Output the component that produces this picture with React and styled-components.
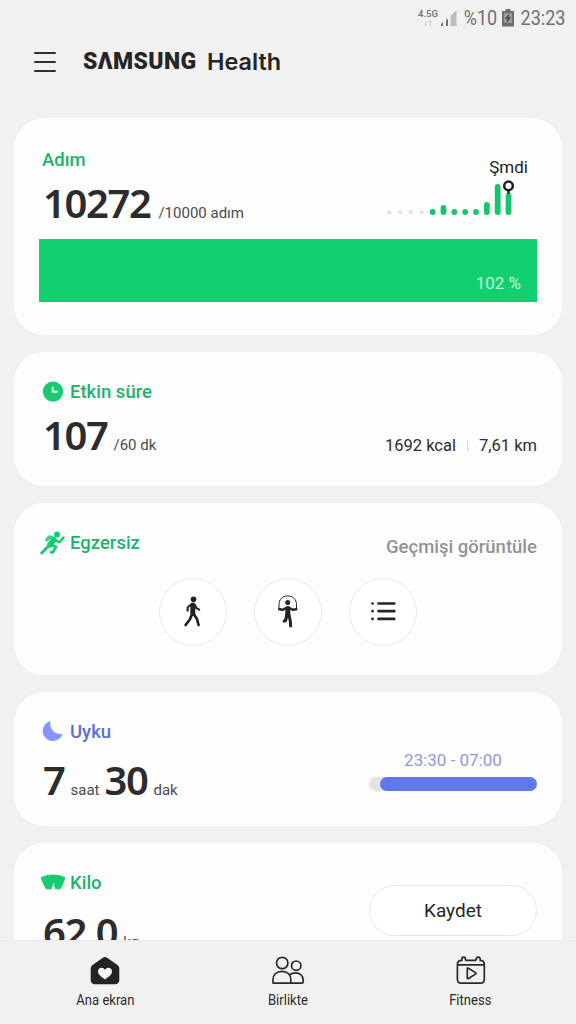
import React from 'react';
import styled, { createGlobalStyle } from 'styled-components';

const hours = [
  { h: 4, empty: true },
  { h: 4, empty: true },
  { h: 4, empty: true },
  { h: 4, empty: true },
  { h: 6 },
  { h: 10 },
  { h: 6 },
  { h: 6 },
  { h: 6 },
  { h: 13 },
  { h: 31 },
  { h: 22 },
];

function StepChart() {
  return (
    <ChartSvg width="130" height="38" viewBox="0 0 130 38">
      {hours.map((item, i) => {
        const w = item.empty ? 4.6 : 5.8;
        const bottom = item.empty ? 34.3 : 35;
        return (
          <rect
            key={i}
            x={4.3 + i * 10.84 - w / 2}
            y={bottom - item.h}
            width={w}
            height={item.h}
            rx={w / 2}
            fill={item.empty ? '#e4e4e4' : '#14c66c'}
          />
        );
      })}
      <path d="M123.500 10v4" stroke="#1d1d1d" strokeWidth="2.400" />
      <circle cx="123.500" cy="5.900" r="4.300" fill="#fff" stroke="#1d1d1d" strokeWidth="2.500" />
    </ChartSvg>
  );
}

function SignalIcon() {
  return (
    <svg width="18" height="18" viewBox="0 0 18 18">
      <path d="M1 17v-2l2-2v4z M6 17v-5.500l2-2V17z" fill="#707070" />
      <path d="M10.500 17V7L16.500 1v16z" fill="#bdbdbd" />
    </svg>
  );
}

function BatteryIcon() {
  return (
    <svg width="12" height="18" viewBox="0 0 12 18">
      <path d="M3.500 0h5v2H12v15.500H0V2h3.500z" fill="#6d6d6d" />
      <path d="M2 4h8v10H2z" fill="#9a9a9a" />
      <path d="M7.500 4L2.800 10h2.500l-1 4.500L9.200 8.300H6.600z" fill="#4d4d4d" />
    </svg>
  );
}

function ClockIcon() {
  return (
    <svg width="26" height="24" viewBox="0 0 26 24">
      <circle cx="13" cy="11.600" r="10.200" fill="#17cb72" />
      <path d="M12.700 6.800v5h5" fill="none" stroke="#eafff3" strokeWidth="1.900" />
    </svg>
  );
}

function RunIcon() {
  return (
    <svg width="26" height="24" viewBox="0 0 26 24" fill="none" strokeLinecap="round" strokeLinejoin="round">
      <circle cx="17" cy="3.600" r="3" fill="#17cb72" />
      <path d="M7 8.800L9.500 6l4.800 1.500" stroke="#3bd68a" strokeWidth="3.600" />
      <path d="M14 8.600L9 14.500 1.800 22" stroke="#17cb72" strokeWidth="3" />
      <path d="M13.800 9L10 13.800" stroke="#17cb72" strokeWidth="5.600" />
      <path d="M10.800 13.800l5.200 2-2.800 5-2.200 .6" stroke="#17cb72" strokeWidth="2.800" />
      <path d="M15 9.200l4.500 2 4-4.700" stroke="#17cb72" strokeWidth="2.500" />
    </svg>
  );
}

function MoonIcon() {
  return (
    <svg width="26" height="24" viewBox="0 0 26 24">
      <path d="M10.500 1C6 2.500 2.800 6.200 2.800 11c0 5.600 4.400 10 9.900 10 4.700 0 8.400-2.700 10-7.200C15.500 15.200 8.800 9.500 10.500 1z" fill="#8496fb" />
    </svg>
  );
}

function ScaleIcon() {
  return (
    <svg width="26" height="24" viewBox="0 0 26 24">
      <path
        d="M1.300 6.600C8 3.200 18 3.200 24.900 6.600c-1 4-2.500 7.300-4.700 11.200H15.600l-2.100-7.600L11.300 17.800H6.300C4.100 14 2.400 10.600 1.300 6.600z"
        fill="#17cb72"
        stroke="#17cb72"
        strokeLinejoin="round"
      />
    </svg>
  );
}

function WalkIcon() {
  return (
    <svg width="32" height="36" viewBox="0 0 32 36" fill="none" stroke="#202423" strokeLinecap="round" strokeLinejoin="round">
      <circle cx="16.500" cy="5.300" r="2.800" fill="#202423" stroke="none" />
      <path d="M15.800 11v8" strokeWidth="5" />
      <path d="M14.500 10.300l-3.800 3-.1 3.500M17.500 10.500l2 3.700 2.700 1.500" strokeWidth="2.100" />
      <path d="M15.300 19.500l-2.500 6-4.200 5.500M16.400 19.500l3.600 5.500 1.600 6" strokeWidth="2.700" />
    </svg>
  );
}

function RopeIcon() {
  return (
    <svg width="32" height="36" viewBox="0 0 32 36" fill="none" stroke="#202423" strokeLinecap="round" strokeLinejoin="round">
      <circle cx="15.700" cy="8.600" r="2.500" fill="#202423" stroke="none" />
      <path d="M7 15V10.500C7 5.500 10.500 1.900 15.700 1.900s8.800 3.600 8.800 8.600V15" strokeWidth="1" />
      <path d="M7.300 15.200l3.700.5 3-1.700h3.500l3.200 1.700 3.600-.5" strokeWidth="2.400" />
      <path d="M15.800 14.500v7" strokeWidth="5" />
      <path d="M14.800 21l-1.200 5.500-1.400.6" strokeWidth="3.200" />
      <path d="M17 21l1.300 6 .3 5" strokeWidth="3" />
    </svg>
  );
}

function ListIcon() {
  return (
    <svg width="32" height="36" viewBox="0 0 32 36" stroke="#252525" strokeWidth="2.700" strokeLinecap="round">
      <path d="M5.500 9.500h.1M5.500 17.200h.1M5.500 24.900h.1M11.500 9.500h15.800M11.500 17.200h15.800M11.500 24.900h15.800" />
    </svg>
  );
}

function HomeIcon() {
  return (
    <svg width="34" height="32" viewBox="0 0 34 32">
      <path d="M15.200 2.500c1.100-.8 2.500-.8 3.600 0l10.300 7.200c1.400 1 2.200 2.300 2.200 4v11.300c0 2.600-1.600 4.200-4.200 4.200H6.900c-2.600 0-4.200-1.600-4.200-4.200V13.700c0-1.700.8-3 2.200-4z" fill="#232323" />
      <path d="M17 24.500c-4.500-3.200-7-5.200-7-8 0-2.200 1.600-3.700 3.500-3.700 1.400 0 2.700.8 3.500 2.200.8-1.400 2.100-2.200 3.500-2.200 1.900 0 3.500 1.500 3.500 3.700 0 2.800-2.500 4.800-7 8z" fill="#f6f6f6" />
    </svg>
  );
}

function PeopleIcon() {
  return (
    <svg width="34" height="32" viewBox="0 0 34 32" fill="none" stroke="#292929" strokeWidth="1.700" strokeLinejoin="round">
      <circle cx="11.200" cy="8" r="5.700" />
      <circle cx="25.200" cy="10.700" r="4.700" />
      <path d="M2 28v-3.200c0-5.200 3.600-8.500 9-8.500s8.800 3.300 8.800 8.500V28.200H3.300c-.8 0-1.300-.1-1.300-.9z" />
      <path d="M19 19.500c1.500-1.200 3.500-1.700 5.500-1.700 4.500 0 7.700 2.800 7.700 7.400v1.700c0 .9-.4 1.300-1.300 1.300H20" />
    </svg>
  );
}

function CalendarIcon() {
  return (
    <svg width="34" height="32" viewBox="0 0 34 32" fill="none" stroke="#292929" strokeWidth="1.700" strokeLinejoin="round">
      <path d="M11.500 5.400H22M11.500 5.400c0-1.400.2-3.200-1.900-3.200S7.800 4.100 7.800 5.400C4.700 5.400 3.400 7 3.400 9.400v14.800c0 2.700 1.400 4 4 4h18.900c2.600 0 4-1.300 4-4V9.400c0-2.400-1.300-4-4.100-4 0-1.300.2-3.200-1.900-3.200S22 4 22 5.400M3.400 9.800h26.900" />
      <path d="M13.300 13.900c0-.8.6-1 1.200-.6l7 4.300c.8.500.8 1 0 1.500l-7 4.400c-.6.400-1.200.1-1.200-.6z" />
    </svg>
  );
}

const tabs = [
  { label: 'Ana ekran', icon: <HomeIcon /> },
  { label: 'Birlikte', icon: <PeopleIcon /> },
  { label: 'Fitness', icon: <CalendarIcon /> },
];

function App() {
  return (
    <>
      <GlobalStyle />
      <Screen>
        <StatusBar>
          <Network>
            4.5G
            <Arrows>↓↑</Arrows>
          </Network>
          <SignalIcon />
          <StatusText $width={33}>%10</StatusText>
          <BatteryIcon />
          <StatusText $width={46}>23:23</StatusText>
        </StatusBar>
        <Header>
          <MenuButton aria-label="Menü">
            <i />
            <i />
            <i />
          </MenuButton>
          <Brand>SΛMSUNG</Brand>
          <Product>Health</Product>
        </Header>

        <Cards>
          <Card $height={217} $top={30}>
            <Row>
              <div>
                <Title>Adım</Title>
                <Metric>
                  <Value>10272</Value>
                  <Unit $left={8}>/10000 adım</Unit>
                </Metric>
              </div>
              <ChartBox>
                <ChartLabel>Şmdi</ChartLabel>
                <StepChart />
              </ChartBox>
            </Row>
            <StepBar>102 %</StepBar>
          </Card>

          <Card $height={134}>
            <Title>
              <ClockIcon />
              Etkin süre
            </Title>
            <Row>
              <Metric>
                <Value>107</Value>
                <Unit>/60 dk</Unit>
              </Metric>
              <Totals>
                1692 kcal
                <Divider />
                7,61 km
              </Totals>
            </Row>
          </Card>

          <Card $height={172}>
            <Row>
              <Title>
                <RunIcon />
                Egzersiz
              </Title>
              <HistoryLink>Geçmişi görüntüle</HistoryLink>
            </Row>
            <Exercises>
              <RoundButton aria-label="Yürüyüş">
                <WalkIcon />
              </RoundButton>
              <RoundButton aria-label="İp atlama">
                <RopeIcon />
              </RoundButton>
              <RoundButton aria-label="Liste">
                <ListIcon />
              </RoundButton>
            </Exercises>
          </Card>

          <Card $height={134}>
            <Row>
              <div>
                <Title $color="#5d6fd6">
                  <MoonIcon />
                  Uyku
                </Title>
                <Metric $gap={12}>
                  <Value>7</Value>
                  <Unit>saat</Unit>
                  <Value>30</Value>
                  <Unit>dak</Unit>
                </Metric>
              </div>
              <Sleep>
                <SleepTime>23:30 - 07:00</SleepTime>
                <SleepTrack>
                  <SleepFill />
                </SleepTrack>
              </Sleep>
            </Row>
          </Card>

          <Card $height={160}>
            <Row>
              <div>
                <Title>
                  <ScaleIcon />
                  Kilo
                </Title>
                <Metric $gap={13}>
                  <Value>62,0</Value>
                  <Unit>kg</Unit>
                </Metric>
              </div>
              <SaveButton>Kaydet</SaveButton>
            </Row>
          </Card>
        </Cards>

        <TabBar>
          {tabs.map((tab) => (
            <Tab key={tab.label}>
              {tab.icon}
              <TabLabel>{tab.label}</TabLabel>
            </Tab>
          ))}
        </TabBar>
      </Screen>
    </>
  );
}

export default App;

const GlobalStyle = createGlobalStyle`
  * {
    box-sizing: border-box;
  }
  body {
    margin: 0;
    background: #f1f1f1;
    font-family: Roboto, 'Noto Sans', sans-serif;
  }
  button {
    padding: 0;
    border: none;
    background: none;
    font-family: inherit;
  }
  svg {
    display: block;
    flex-shrink: 0;
  }
`;

const Screen = styled.div`
  display: flex;
  flex-direction: column;
  width: 576px;
  height: 1024px;
  overflow: hidden;
  background: #f1f1f1;
`;
const StatusBar = styled.div`
  display: flex;
  align-items: center;
  justify-content: flex-end;
  height: 36px;
  padding-right: 10px;
  color: #707070;
`;
const Network = styled.div`
  display: flex;
  flex-direction: column;
  align-items: center;
  margin-right: 2px;
  font-size: 9.5px;
  font-weight: 500;
  line-height: 10px;
`;
const Arrows = styled.span`
  font-size: 9px;
  line-height: 8px;
  color: #a5a5a5;
`;
const StatusText = styled.span`
  display: flex;
  justify-content: center;
  width: ${({ $width }) => $width}px;
  margin: 0 0 0 6px;
  font-size: 20px;
  line-height: 24px;
  transform: scaleX(0.9);
  & + svg {
    margin-left: 5px;
  }
`;
const Header = styled.header`
  display: flex;
  align-items: center;
  height: 51px;
  padding-left: 34px;
  color: #252525;
`;
const MenuButton = styled.button`
  display: flex;
  flex-direction: column;
  gap: 7px;
  width: 22px;
  margin-right: 27px;
  i {
    height: 2px;
    border-radius: 1px;
    background: #303030;
  }
`;
const Brand = styled.span`
  width: 124px;
  font-size: 23px;
  font-weight: 900;
  line-height: 28px;
  letter-spacing: 0.4px;
  white-space: nowrap;
`;
const Product = styled.span`
  font-family: Inter, sans-serif;
  font-size: 23.4px;
  font-weight: 600;
  line-height: 28px;
`;
const Cards = styled.main`
  display: flex;
  flex: 1;
  flex-direction: column;
  gap: 17px;
  min-height: 0;
  padding: 31px 14px 0;
  overflow: hidden;
`;
const Card = styled.section`
  flex-shrink: 0;
  height: ${({ $height }) => $height}px;
  padding: ${({ $top = 28 }) => $top}px 25px 0 28px;
  border-radius: 30px;
  background: #fdfdfd;
`;
const Row = styled.div`
  display: flex;
  justify-content: space-between;
`;
const Title = styled.h2`
  display: flex;
  align-items: center;
  height: 24px;
  margin: 0;
  font-size: 18.5px;
  font-weight: 500;
  line-height: 24px;
  color: ${({ $color = '#1eb26d' }) => $color};
  svg {
    margin-right: 4px;
    margin-left: -2px;
  }
`;
const Metric = styled.div`
  display: flex;
  align-items: baseline;
  height: 48px;
  margin-top: ${({ $gap = 7 }) => $gap}px;
`;
const Value = styled.span`
  margin-left: 1px;
  font-family: 'Noto Sans', sans-serif;
  font-size: 40px;
  font-weight: 600;
  line-height: 48px;
  letter-spacing: -1.4px;
  color: #2c2c2c;
`;
const Unit = styled.span`
  margin: 0 4px 0 ${({ $left = 6 }) => $left}px;
  font-size: 15px;
  color: #4b4b4b;
`;
const ChartBox = styled.div`
  display: flex;
  flex-direction: column;
  align-items: flex-end;
  padding-top: 7px;
`;
const ChartLabel = styled.div`
  margin-right: 9px;
  font-size: 17px;
  line-height: 24px;
  color: #222;
`;
const ChartSvg = styled.svg`
  margin: 1px 22px 0 0;
`;
const StepBar = styled.div`
  display: flex;
  align-items: flex-end;
  justify-content: flex-end;
  height: 63px;
  margin: 12px 0 0 -3px;
  padding: 0 16px 8px 0;
  background: #12d06f;
  font-size: 17px;
  line-height: 22px;
  color: #c5f7dc;
`;
const Totals = styled.div`
  display: flex;
  align-items: center;
  height: 24px;
  margin-top: 29px;
  font-size: 16.5px;
  color: #2c2c2c;
`;
const Divider = styled.span`
  width: 1px;
  height: 10px;
  margin: 2px 11px 0;
  background: #d6d6d6;
`;
const HistoryLink = styled.span`
  margin-top: 4px;
  font-size: 18.5px;
  font-weight: 500;
  line-height: 24px;
  color: #939393;
`;
const Exercises = styled.div`
  display: flex;
  justify-content: center;
  gap: 27px;
  margin: 19px 0 0 -3px;
`;
const RoundButton = styled.button`
  display: flex;
  align-items: center;
  justify-content: center;
  width: 68px;
  height: 68px;
  border: 1px solid #e9e9e9;
  border-radius: 50%;
  background: #fff;
`;
const Sleep = styled.div`
  display: flex;
  flex-direction: column;
  align-items: center;
  width: 168px;
  padding-top: 28px;
`;
const SleepTime = styled.span`
  font-size: 17px;
  line-height: 24px;
  color: #8f99de;
`;
const SleepTrack = styled.div`
  width: 168px;
  height: 14px;
  margin-top: 5px;
  padding-left: 11px;
  border-radius: 7px;
  background: #e4e4e6;
`;
const SleepFill = styled.div`
  height: 14px;
  border-radius: 7px;
  background: #5f78e8;
`;
const SaveButton = styled.button`
  width: 168px;
  height: 51px;
  margin-top: 14px;
  border: 1px solid #e8e8e8;
  border-radius: 26px;
  background: #fff;
  font-size: 19px;
  color: #252525;
`;
const TabBar = styled.nav`
  display: flex;
  flex-shrink: 0;
  height: 84px;
  padding: 14px 14px 0;
  border-top: 1px solid #e8e8e8;
  background: #f1f1f1;
`;
const Tab = styled.div`
  display: flex;
  flex: 1;
  flex-direction: column;
  align-items: center;
`;
const TabLabel = styled.span`
  margin-top: 3px;
  font-size: 15px;
  line-height: 20px;
  color: #2b2b2b;
  transform: scaleX(0.87);
`;
